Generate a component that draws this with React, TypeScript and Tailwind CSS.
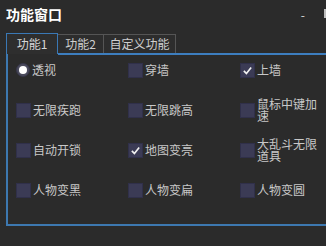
import React from "react";

type Item = { label: string; kind: "radio" | "box"; checked?: boolean };

const items: Item[] = [
  { label: "透视", kind: "radio", checked: true },
  { label: "穿墙", kind: "box" },
  { label: "上墙", kind: "box", checked: true },
  { label: "无限疾跑", kind: "box" },
  { label: "无限跳高", kind: "box" },
  { label: "鼠标中键加速", kind: "box" },
  { label: "自动开锁", kind: "box" },
  { label: "地图变亮", kind: "box", checked: true },
  { label: "大乱斗无限道具", kind: "box" },
  { label: "人物变黑", kind: "box" },
  { label: "人物变扁", kind: "box" },
  { label: "人物变圆", kind: "box" },
];

const font = { fontFamily: '"Noto Sans CJK SC", "Noto Sans", sans-serif' };

const Mark = ({ item }: { item: Item }) => {
  if (item.kind === "radio") {
    return (
      <span className="w-[14px] h-[14px] shrink-0 rounded-full bg-[#4a4a5c] border border-[#36364a] flex items-center justify-center">
        <span className="w-[8px] h-[8px] rounded-full bg-white" />
      </span>
    );
  }
  return (
    <span className="w-[15px] h-[15px] shrink-0 bg-[#3b3b55] border border-[#30304a] flex items-center justify-center">
      {item.checked ? (
        <svg width="11" height="11" viewBox="0 0 12 12">
          <path d="M2 6.5 L4.8 9.2 L10 2.8" fill="none" stroke="#f0f0f0" strokeWidth="1.8" />
        </svg>
      ) : null}
    </span>
  );
};

export default function App() {
  return (
    <div className="w-[326px] h-[246px] bg-[#2b2b2b] overflow-hidden relative" style={font}>
      <div className="h-[33px] flex items-start justify-between pl-[6px] pt-[5px]">
        <span className="text-[14px] leading-[18px] font-bold text-white">功能窗口</span>
        <span className="text-[12px] leading-[14px] text-[#dddddd] mr-[21px] mt-[3px]">-</span>
      </div>
      <div className="absolute right-0 top-[9px] w-[2px] h-[9px] bg-[#bdbdbd]" />
      <div className="flex pl-[6px] h-[21px] items-end">
        <div className="w-[52px] h-[21px] border border-[#3a78b5] border-b-0 bg-[#2e2e2e] text-[12px] leading-[19px] text-[#d6d6d6] text-center">
          功能1
        </div>
        <div className="w-[46px] h-[20px] border border-[#555555] border-l-0 border-b-0 bg-[#2d2d2d] text-[12px] leading-[18px] text-[#cfcfcf] text-center">
          功能2
        </div>
        <div className="w-[72px] h-[20px] border border-[#555555] border-l-0 border-b-0 bg-[#2d2d2d] text-[12px] leading-[18px] text-[#cfcfcf] text-center">
          自定义功能
        </div>
      </div>
      <div className="ml-[6px] w-[340px] h-[172px] border-2 border-[#3d78b0] border-t-0 relative">
        <div className="absolute left-[50px] right-0 top-[-1px] h-[2px] bg-[#3d7ebf]" />
        <div className="grid grid-cols-[112px_112px_112px] auto-rows-[26px] gap-y-[14px] pl-[8px] pt-[3px]">
          {items.map((item) => (
            <div key={item.label} className="flex items-center gap-[2px]">
              <Mark item={item} />
              <span className="text-[12px] leading-[12px] text-[#c8c8c8] max-w-[62px] break-all">
                {item.label}
              </span>
            </div>
          ))}
        </div>
      </div>
    </div>
  );
}
